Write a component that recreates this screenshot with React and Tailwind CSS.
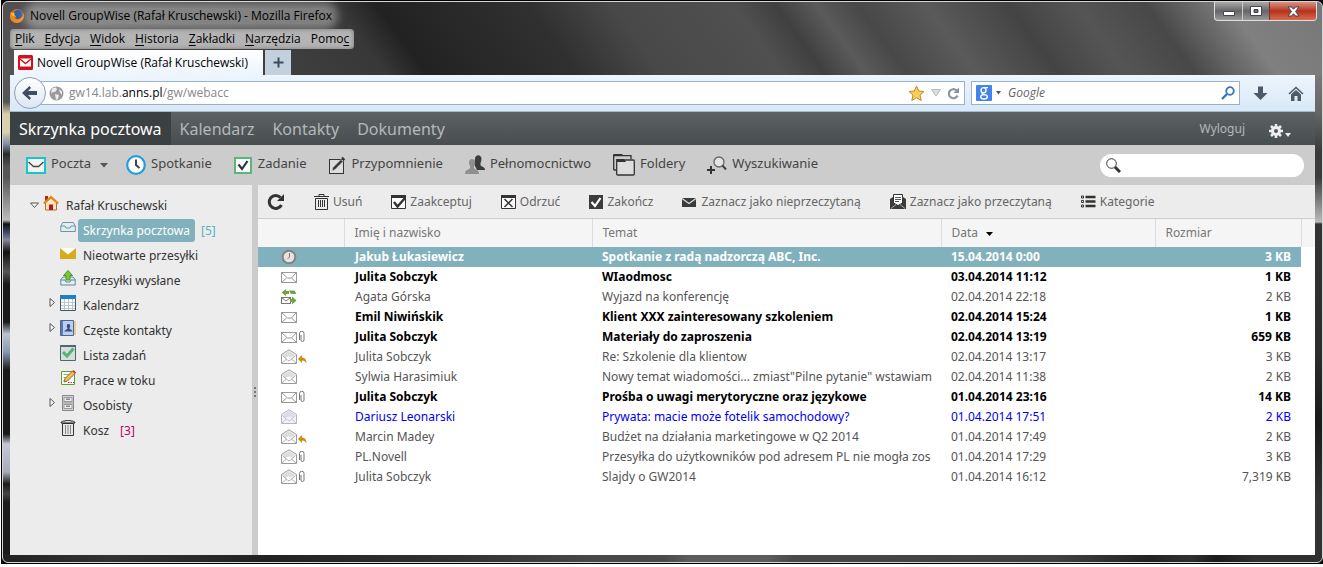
import React, { useState } from 'react'

const menu = [
  ['', 'P', 'lik'], ['', 'E', 'dycja'], ['', 'W', 'idok'], ['', 'H', 'istoria'],
  ['', 'Z', 'akładki'], ['', 'N', 'arzędzia'], ['Pomo', 'c', ''],
]

const tabs = ['Skrzynka pocztowa', 'Kalendarz', 'Kontakty', 'Dokumenty']

const messages = [
  { icon: 'clock', name: 'Jakub Łukasiewicz', subject: 'Spotkanie z radą nadzorczą ABC, Inc.', date: '15.04.2014 0:00', size: '3 KB', style: 'selected' },
  { icon: 'closed', name: 'Julita Sobczyk', subject: 'WIaodmosc', date: '03.04.2014 11:12', size: '1 KB', style: 'unread' },
  { icon: 'exchange', name: 'Agata Górska', subject: 'Wyjazd na konferencję', date: '02.04.2014 22:18', size: '2 KB', style: 'read' },
  { icon: 'closed', name: 'Emil Niwińskik', subject: 'Klient XXX zainteresowany szkoleniem', date: '02.04.2014 15:24', size: '1 KB', style: 'unread' },
  { icon: 'closed', extra: 'clip', name: 'Julita Sobczyk', subject: 'Materiały do zaproszenia', date: '02.04.2014 13:19', size: '659 KB', style: 'unread' },
  { icon: 'open', extra: 'reply', name: 'Julita Sobczyk', subject: 'Re: Szkolenie dla klientow', date: '02.04.2014 13:17', size: '3 KB', style: 'read' },
  { icon: 'open', name: 'Sylwia Harasimiuk', subject: 'Nowy temat wiadomości... zmiast"Pilne pytanie" wstawiam', date: '02.04.2014 11:38', size: '2 KB', style: 'read' },
  { icon: 'closed', extra: 'clip', name: 'Julita Sobczyk', subject: 'Prośba o uwagi merytoryczne oraz językowe', date: '01.04.2014 23:16', size: '14 KB', style: 'unread' },
  { icon: 'personal', name: 'Dariusz Leonarski', subject: 'Prywata: macie może fotelik samochodowy?', date: '01.04.2014 17:51', size: '2 KB', style: 'blue' },
  { icon: 'open', extra: 'reply', name: 'Marcin Madey', subject: 'Budżet na działania marketingowe w Q2 2014', date: '01.04.2014 17:49', size: '2 KB', style: 'read' },
  { icon: 'open', extra: 'clip', name: 'PL.Novell', subject: 'Przesyłka do użytkowników pod adresem PL nie mogła zos', date: '01.04.2014 17:29', size: '3 KB', style: 'read' },
  { icon: 'open', extra: 'clip', name: 'Julita Sobczyk', subject: 'Slajdy o GW2014', date: '01.04.2014 16:12', size: '7,319 KB', style: 'read' },
]

const rowStyles = {
  selected: 'bg-[#82b1be] font-bold text-white',
  unread: 'font-bold text-black',
  read: 'text-[#555]',
  blue: 'text-[#0000ee]',
}

// message list icons
const ClosedMail = () => (
  <svg width="16" height="16" viewBox="0 0 16 16" fill="none">
    <rect x=".5" y="3.5" width="15" height="10" fill="#fff" stroke="#999" />
    <path d="M1 4l5.500 5h4L15 4M1 13l4.500-4M15 13l-4.500-4" stroke="#999" />
  </svg>
)

const OpenMail = ({ fill = '#fff', flap = '#ddd', line = '#999' }) => (
  <svg width="16" height="16" viewBox="0 0 16 16" fill="none">
    <path d="M.5 5.500L8 .8l7.500 4.700v9H.5z" fill={fill} stroke={line} />
    <path d="M2 5.500L8 2l6 3.500-2.500 3L8 7.500 4 9z" fill={flap} />
    <path d="M1.500 6.500l5 4.500L8 12l1.500-1 5-4.500M1 14l4.500-4M15 14l-4.500-4" stroke={line} strokeWidth=".8" />
  </svg>
)

const Exchange = () => (
  <svg width="16" height="16" viewBox="0 0 16 16">
    <path d="M5 0v7L.5 3.500zM5 2h3v3H5zM8 1.500h5.500l2 3.500H10z" fill="#6da544" />
    <rect x=".5" y="8.500" width="9" height="6" fill="#fff" stroke="#777" />
    <path d="M1 9l4 3 4-3" fill="none" stroke="#777" />
    <path d="M9 10h2V7.500l4.500 4L11 15.500V13H9z" fill="#6da544" />
  </svg>
)

const Clock = () => (
  <svg width="16" height="16" viewBox="0 0 16 16">
    <circle cx="8" cy="8" r="6.300" fill="#e4e4e4" stroke="#8a8080" strokeWidth="2" />
    <path d="M8.500 4v4L6.500 10" fill="none" stroke="#777" />
  </svg>
)

const Clip = () => (
  <svg width="6" height="12" viewBox="0 0 6 12" fill="none">
    <path d="M.5 9V2.500a2 2 0 0 1 4.500 0V9a1.200 1.200 0 0 1-3 0V4" stroke="#777" />
  </svg>
)

const Reply = () => (
  <svg width="9" height="9" viewBox="0 0 9 9">
    <path d="M0 4l4-4v2.500c3 0 4.500 2 4.500 6C7.500 6.500 6.500 5.500 4 5.500V8z" fill="#cf8a10" />
  </svg>
)

const MessageIcon = ({ type }) => {
  if (type === 'clock') return <Clock />
  if (type === 'exchange') return <Exchange />
  if (type === 'open') return <OpenMail />
  if (type === 'personal') return <OpenMail fill="#f2f2fa" flap="#dcdce6" line="#b5b5c2" />
  return <ClosedMail />
}

// main toolbar icons
const MailIcon = () => (
  <svg width="20" height="20" viewBox="0 0 20 20" fill="none">
    <rect x="1" y="3" width="18" height="15" fill="#f4f4f4" stroke="#14c7cb" strokeWidth="2" />
    <path d="M2.500 7l5 4.500h5l5-4.500" stroke="#444" strokeWidth="1.300" />
  </svg>
)

const TimeIcon = () => (
  <svg width="20" height="20" viewBox="0 0 20 20" fill="none">
    <circle cx="10" cy="10" r="8.800" fill="#fff" stroke="#1fa0dc" strokeWidth="2.200" />
    <path d="M10 4.500V10l3.500 3" stroke="#444" strokeWidth="2" />
  </svg>
)

const TaskIcon = () => (
  <svg width="19" height="20" viewBox="0 0 19 20" fill="none">
    <rect x="1" y="3" width="16" height="15" fill="#fff" stroke="#58b878" strokeWidth="2" />
    <path d="M4.500 9.500l3.500 4.500 5.500-8" stroke="#333" strokeWidth="2.200" />
  </svg>
)

const NoteIcon = () => (
  <svg width="18" height="20" viewBox="0 0 18 20" fill="none">
    <rect x="1.500" y="4.500" width="14" height="14" fill="#ddd" stroke="#333" />
    <path d="M4 16l1-3.500 8-8 2 2-8 8z" fill="#333" stroke="#ccc" strokeWidth=".6" />
    <path d="M14 2.500l2.500 2.500" stroke="#333" strokeWidth="2" />
  </svg>
)

const PeopleIcon = () => (
  <svg width="20" height="20" viewBox="0 0 20 20">
    <path d="M10 4c0-5 6.500-5 6.500 0 0 2-.7 3-1 4v2c1 2 4.500 1.500 4.500 5h-8L9 9z" fill="#3c3c3c" />
    <path d="M4 7c0-4 6-4 6 0 0 2-.6 3-1 4v2c1 2 5 1 5 6H0c0-5 4-4 5-6v-2C4.500 10 4 9 4 7z" fill="#8f8f8f" />
  </svg>
)

const FoldersIcon = () => (
  <svg width="22" height="22" viewBox="0 0 22 22" fill="none">
    <path d="M.7 16V1.700H18V5M.7 16H3" stroke="#333" strokeWidth="1.300" />
    <path d="M0 0h9l2 2H1z" fill="#333" />
    <rect x="3.700" y="6" width="17.600" height="15" rx="1" fill="#ddd" stroke="#333" strokeWidth="1.300" />
    <path d="M3 5h8l2 3H4z" fill="#333" />
  </svg>
)

const FindIcon = () => (
  <svg width="20" height="20" viewBox="0 0 20 20" fill="none">
    <circle cx="12" cy="7" r="5" fill="#e4e4e4" stroke="#666" strokeWidth="1.300" />
    <path d="M15.500 10.500l3.500 4" stroke="#444" strokeWidth="2" />
    <path d="M0 15h8M4 11v8" stroke="#333" strokeWidth="2" />
  </svg>
)

const tools = [
  { label: 'Spotkanie', icon: <TimeIcon /> },
  { label: 'Zadanie', icon: <TaskIcon /> },
  { label: 'Przypomnienie', icon: <NoteIcon /> },
  { label: 'Pełnomocnictwo', icon: <PeopleIcon /> },
  { label: 'Foldery', icon: <FoldersIcon /> },
  { label: 'Wyszukiwanie', icon: <FindIcon /> },
]

// message action icons
const actions = [
  {
    label: 'Usuń',
    icon: (
      <svg width="15" height="16" viewBox="0 0 15 16" fill="none" stroke="#333">
        <path d="M0 2.500h15M5 2V.5h5V2M1.500 4.500h12v11h-12zM4.500 6v7M6.500 6v7M8.500 6v7M10.500 6v7" />
      </svg>
    ),
  },
  {
    label: 'Zaakceptuj',
    icon: (
      <svg width="15" height="16" viewBox="0 0 15 16" fill="none" stroke="#333">
        <path d="M.5 1.500h14v13H.5z" fill="#fff" />
        <path d="M0 2.500h15" strokeWidth="3" />
        <path d="M3 8l3.500 4.500L14 4" strokeWidth="2.400" />
      </svg>
    ),
  },
  {
    label: 'Odrzuć',
    icon: (
      <svg width="15" height="16" viewBox="0 0 15 16" fill="none" stroke="#333">
        <path d="M.5 1.500h14v13H.5z" fill="#fff" />
        <path d="M0 2.500h15" strokeWidth="3" />
        <path d="M3.500 5l8 8M11.500 5l-8 8" strokeWidth="1.500" />
      </svg>
    ),
  },
  {
    label: 'Zakończ',
    icon: (
      <svg width="14" height="16" viewBox="0 0 14 16" fill="none">
        <path d="M0 1h14v14H0z" fill="#3c3c3c" />
        <path d="M2.500 8l3.500 4 5.500-8" stroke="#fff" strokeWidth="2.200" />
      </svg>
    ),
  },
  {
    label: 'Zaznacz jako nieprzeczytaną',
    icon: (
      <svg width="15" height="16" viewBox="0 0 15 16" fill="none">
        <path d="M0 4h14v9H0z" fill="#3c3c3c" />
        <path d="M0 4.500l7 5 7-5" stroke="#ddd" strokeWidth="1.200" />
      </svg>
    ),
  },
  {
    label: 'Zaznacz jako przeczytaną',
    icon: (
      <svg width="16" height="16" viewBox="0 0 16 16" fill="none">
        <path d="M0 5l3-2 5 7 5-7 3 2v10H0z" fill="#3c3c3c" />
        <path d="M3.500.5h9V9l-4.500 2.500L3.500 9z" fill="#fff" stroke="#333" />
        <path d="M5 3.500h6M5 5.500h6M5 7.500h4" stroke="#555" />
        <path d="M1 14.500l5-4M15 14.500l-5-4" stroke="#aaa" />
      </svg>
    ),
  },
  {
    label: 'Kategorie',
    icon: (
      <svg width="15" height="16" viewBox="0 0 15 16" fill="none" stroke="#333">
        <path d="M4.500 3h10M4.500 7.500h10M4.500 12h10" strokeWidth="2.400" />
        <path d="M.5 2h2v2h-2zM.5 6.500h2v2h-2zM.5 11h2v2h-2z" />
      </svg>
    ),
  },
]

// folder tree icons
const folders = [
  {
    label: 'Skrzynka pocztowa', count: '[5]', active: true,
    icon: <path d="M.8 6l2-3.500h10.500l2 3.500v5.500H.8zM1 6h4l1 2h4l1-2h4" fill="#e3eef1" stroke="#6c96a3" />,
  },
  {
    label: 'Nieotwarte przesyłki',
    icon: (
      <>
        <path d="M0 3h16v11H0z" fill="#d6ab1c" />
        <path d="M0 3h16L8 9.500z" fill="#fff" />
      </>
    ),
  },
  {
    label: 'Przesyłki wysłane',
    icon: (
      <>
        <path d="M.8 9.500L3 7h10l2.200 2.500V15H.8zM1 10h4l1 2h4l1-2h4" fill="#e3eef1" stroke="#5b8b9a" />
        <path d="M8 .5l4.500 5H10V10H6V5.500H3.500z" fill="#7cc63c" stroke="#4a9a1c" />
      </>
    ),
  },
  {
    label: 'Kalendarz', branch: true,
    icon: (
      <>
        <path d="M.5.5h15v15H.5z" fill="#fff" stroke="#456" />
        <path d="M0 0h16v4H0z" fill="#1b83c4" />
        <path d="M1 7.500h14M1 10.500h14M1 13.500h14M4.500 4v11M8.500 4v11M12.500 4v11" stroke="#bcc6cf" />
      </>
    ),
  },
  {
    label: 'Częste kontakty', branch: true,
    icon: (
      <>
        <path d="M13 1h3v14h-3z" fill="#e4cf93" />
        <path d="M.5.5h13v15H.5z" fill="#bccdf0" stroke="#4e6494" />
        <path d="M1 1h2v14H1z" fill="#5c78b4" />
        <path d="M4.500 11.500c0-2 3-1.500 3-3.500-1.500-2-.5-4 1-4s2.500 2 1 4c0 2 3 1.500 3 3.500z" fill="#354f86" />
      </>
    ),
  },
  {
    label: 'Lista zadań',
    icon: (
      <>
        <path d="M.5.500h15v15H.5z" fill="#dcdcdc" stroke="#4d6670" />
        <path d="M0 0h16v2H0z" fill="#4d6670" />
        <path d="M3 7l4 4 6.500-7.500" fill="none" stroke="#4bb778" strokeWidth="3" />
      </>
    ),
  },
  {
    label: 'Prace w toku',
    icon: (
      <>
        <path d="M1.500 1.500h13v13h-13z" fill="#fff" stroke="#59a02c" />
        <path d="M3.500 4.500h6M3.500 7.500h4M3.500 10.500h2" stroke="#85b56a" />
        <path d="M4 12l1-3.500 7.500-7.500 2.500 2.500L7.500 11z" fill="#edc060" stroke="#8e6a26" />
        <path d="M12.500 1l1-1 2.500 2.500-1 1z" fill="#c33" />
        <path d="M8 12.500h6" stroke="#c33" strokeDasharray="1.500 1" />
      </>
    ),
  },
  {
    label: 'Osobisty', branch: true,
    icon: (
      <>
        <path d="M2.500.5h11v15h-11z" fill="#d5d5d5" stroke="#888" />
        <path d="M2 8h12M4 2.500h8v4H4zM4 9.500h8v4H4z" fill="#eee" stroke="#999" />
        <path d="M6 3.500h4v1.500H6zM6 10.500h4V12H6z" fill="#888" />
      </>
    ),
  },
  {
    label: 'Kosz', count: '[3]',
    icon: (
      <>
        <path d="M2.500 3.500h11v12h-11z" fill="#e8e8e8" stroke="#333" />
        <path d="M1 3c0-1.500 2-2 4-2 1-1 5-1 6 0 2 0 4 .5 4 2z" fill="#ddd" stroke="#222" />
        <path d="M5.500 5v9M8 5v9M10.500 5v9" stroke="#888" />
      </>
    ),
  },
]

const Triangle = ({ open }) => (
  <svg width="9" height="9" viewBox="0 0 9 9" fill="#f6f6f6" stroke="#555" className="shrink-0">
    {open ? <path d="M.5 2h8L4.500 6.500z" /> : <path d="M2 .5v8L6.500 4.500z" />}
  </svg>
)

const WindowBar = () => (
  <div className="flex justify-between h-[27px]">
    <div className="flex items-center gap-1.5 text-xs text-black">
      <svg width="14" height="14" viewBox="0 0 14 14">
        <circle cx="7" cy="7" r="7" fill="#e2681a" />
        <circle cx="8" cy="5.500" r="4.500" fill="#2c5fa8" />
        <path d="M1 3c0 3 2 3 4 3.500 2 .5 1 2.500-.5 2.500C7 12 12 10 13.500 5 15 11 10 14 7 14 3 14 0 11 0 7c0-2 .5-3 1-4z" fill="#ef8a1f" />
        <path d="M1 3c1 1 2 1 4 1-1 1-1 2 0 2.500C3 8 1 6 1 3z" fill="#f9c23c" />
      </svg>
      <span className="rounded-full bg-white/35 shadow-[0_0_8px_6px_rgba(255,255,255,0.35)]">Novell GroupWise (Rafał Kruschewski) - Mozilla Firefox</span>
    </div>
    <div className="flex h-[19px] -mr-0.5 rounded-b border border-t-0 border-[#ddd] overflow-hidden bg-linear-to-b from-[#aaa] via-[#666] to-[#999]">
      <button type="button" aria-label="Minimalizuj" className="w-7 flex items-center justify-center border-r border-[#ccc]">
        <svg width="12" height="12" viewBox="0 0 12 12"><path d="M.5 6.500h11v4H.5z" fill="#fff" stroke="#445" /></svg>
      </button>
      <button type="button" aria-label="Maksymalizuj" className="w-[26px] flex items-center justify-center">
        <svg width="12" height="12" viewBox="0 0 12 12"><path fillRule="evenodd" d="M.5 1.500h11v9H.5zM4 4.500h4v3H4z" fill="#fff" stroke="#445" /></svg>
      </button>
      <button type="button" aria-label="Zamknij" className="w-[47px] flex items-center justify-center border-l border-[#733] bg-linear-to-b from-[#d89484] via-[#b5301a] to-[#d86a4c]">
        <svg width="13" height="11" viewBox="0 0 13 11"><path d="M1 1h3.500l2 2.200L8.500 1H12L8.500 5.500 12 10H8.500l-2-2.300L4.500 10H1l3.500-4.500z" fill="#fff" stroke="#445" /></svg>
      </button>
    </div>
  </div>
)

const MenuBar = () => (
  <nav className="flex self-start h-5 items-center gap-2.5 px-[5px] rounded bg-[#b4b4b4] text-xs text-black shadow-[inset_0_0_4px_#777]">
    {menu.map(([before, key, after]) => (
      <button type="button" key={before + key}>{before}<span className="underline underline-offset-2">{key}</span>{after}</button>
    ))}
  </nav>
)

const BrowserTabs = () => (
  <div className="flex h-[25px] mt-px ml-1">
    <div className="flex items-center gap-1 w-[249px] pl-1 bg-linear-to-b from-white to-[#edf4fc] text-xs text-black">
      <svg width="15" height="15" viewBox="0 0 15 15">
        <rect width="15" height="15" rx="1.500" fill="#d5101c" />
        <rect x="2" y="3.500" width="11" height="8" fill="#fff" />
        <path d="M2 4l5.500 4.500L13 4" fill="none" stroke="#d5101c" strokeWidth="1.400" />
      </svg>
      Novell GroupWise (Rafał Kruschewski)
    </div>
    <button type="button" aria-label="Nowa karta" className="w-[26px] ml-0.5 flex items-center justify-center bg-[#c3d0de]">
      <svg width="11" height="11" viewBox="0 0 11 11"><path d="M.5 5.500h10M5.500.5v10" stroke="#3c4c5c" strokeWidth="2" /></svg>
    </button>
  </div>
)

const AddressBar = () => (
  <div className="flex items-center h-[37px] pl-1 pr-[11px] bg-linear-to-b from-[#edf5fd] to-[#d9e8f7] border-b border-[#a2bccf]">
    <button type="button" aria-label="Wstecz" className="relative z-10 size-8 shrink-0 rounded-full border border-[#8b9fb5] bg-linear-to-b from-white to-[#dbe6f2] flex items-center justify-center">
      <svg width="18" height="16" viewBox="0 0 18 16"><path d="M1 8l7.500-7L10 3 7 6h9v4H7l3 3-1.500 2z" fill="#3f4d60" /></svg>
    </button>
    <div className="flex items-center flex-1 h-6 -ml-2 pl-2.5 pr-1 bg-white border border-[#9bb3c8]">
      <svg width="15" height="15" viewBox="0 0 15 15" className="shrink-0">
        <circle cx="7.500" cy="7.500" r="7" fill="#9a9a9a" />
        <path d="M3 2.500l4-1 1 2-2 2.500H4l-2 2zM6 8l4 1-1 4-2 1zM10 3l3 2.500V9l-2-2.500z" fill="#ececec" />
      </svg>
      <a href="#" className="flex-1 ml-[5px] text-xs text-[#888]">gw14.lab.<span className="text-black">anns.pl</span>/gw/webacc</a>
      <svg width="17" height="17" viewBox="0 0 17 17"><path d="M8.500 1l2.200 5 5.300.5-4 3.600 1.200 5.400-4.700-2.800-4.700 2.800L5 10.100 1 6.500 6.300 6z" fill="#f9cf58" stroke="#c08a28" /></svg>
      <svg width="10" height="8" viewBox="0 0 10 8" className="mx-1.5"><path d="M.5.5h9L5 7z" fill="#ddd" stroke="#b4bbc3" /></svg>
      <svg width="13" height="13" viewBox="0 0 13 13"><path d="M10.500 8.500a4.500 4.500 0 1 1-1-5" fill="none" stroke="#8794a3" strokeWidth="2.200" /><path d="M12 .5V6H6.500z" fill="#8794a3" /></svg>
    </div>
    <div className="flex items-center w-[269px] h-6 ml-1.5 pl-1 pr-1 bg-white border border-[#9bb3c8]">
      <svg width="16" height="16" viewBox="0 0 16 16" className="shrink-0">
        <rect width="16" height="16" rx="1" fill="#4283ee" />
        <g fill="none" stroke="#fff" strokeWidth="1.400">
          <ellipse cx="7.500" cy="5.200" rx="2.500" ry="2.600" />
          <ellipse cx="8" cy="11.800" rx="3.300" ry="2.200" />
          <path d="M8 2.600h4M7 7.500c-2 1.200 0 1.800 1.500 2" />
        </g>
      </svg>
      <svg width="5" height="4" viewBox="0 0 5 4" className="shrink-0 ml-1"><path d="M0 0h5L2.500 3.500z" fill="#555" /></svg>
      <input type="text" aria-label="Szukaj w Google" placeholder="Google" className="flex-1 min-w-0 ml-[7px] text-xs outline-none placeholder:italic placeholder:text-[#666]" />
      <svg width="14" height="14" viewBox="0 0 14 14" fill="none" stroke="#3c75ad"><circle cx="9" cy="5" r="3.800" strokeWidth="1.800" /><path d="M6 8l-5 5" strokeWidth="2.400" /></svg>
    </div>
    <svg width="15" height="15" viewBox="0 0 15 15" className="ml-[13px]"><path d="M5 .5h5V7h4.500l-7 7L.5 7H5z" fill="#4c5968" /></svg>
    <svg width="16" height="15" viewBox="0 0 16 15" className="ml-5">
      <path d="M1 8l7-6.500L15 8" fill="none" stroke="#4c5968" strokeWidth="1.600" />
      <path d="M3 8.500L8 4l5 4.500V15H9.500v-5h-3v5H3z" fill="#4c5968" />
    </svg>
  </div>
)

const AppHeader = ({ tab, setTab }) => (
  <header className="flex items-stretch h-[33px] bg-linear-to-b from-[#5c6264] to-[#484e50]">
    <nav className="flex text-base">
      {tabs.map((t) => (
        <button type="button" key={t} onClick={() => setTab(t)}
          className={t === tab ? 'px-[9px] bg-[#3b4143] text-white' : 'px-[9px] text-[#b4b8ba]'}
        >{t}</button>
      ))}
    </nav>
    <a href="#" className="ml-auto self-center text-xs text-[#b4b8ba]">Wyloguj</a>
    <button type="button" aria-label="Opcje" className="flex items-center gap-0.5 ml-6 mr-6">
      <svg width="14" height="14" viewBox="0 0 14 14" className="mt-1">
        <circle cx="7" cy="7" r="3.500" fill="none" stroke="#eee" strokeWidth="3" />
        <path d="M7 0v3M7 11v3M0 7h3M11 7h3M2 2l2 2M10 10l2 2M2 12l2-2M10 4l2-2" stroke="#eee" strokeWidth="2.500" />
      </svg>
      <svg width="6" height="4" viewBox="0 0 6 4" className="mt-3"><path d="M0 0h6L3 4z" fill="#eee" /></svg>
    </button>
  </header>
)

const Toolbar = () => (
  <div className="flex items-center h-10 pl-4 pr-[11px] bg-[#ccc] text-[13px] text-[#444]">
    <div className="flex items-center gap-[22px]">
      <button type="button" className="flex items-center gap-[5px]">
        <MailIcon /><span className="pb-0.5">Poczta</span>
        <svg width="8" height="5" viewBox="0 0 8 5" className="ml-1 -mr-1"><path d="M0 0h8L4 4.500z" fill="#555" /></svg>
      </button>
      {tools.map((tool) => (
        <button type="button" key={tool.label} className="flex items-center gap-[5px]">
          {tool.icon}<span className="pb-0.5">{tool.label}</span>
        </button>
      ))}
    </div>
    <label className="flex items-center w-[204px] h-[23px] ml-auto px-1.5 rounded-full bg-white">
      <svg width="15" height="15" viewBox="0 0 15 15" fill="none" stroke="#333"><circle cx="5.500" cy="5.500" r="4.800" /><path d="M9 9l5 5" strokeWidth="3" /></svg>
      <input type="search" aria-label="Szukaj" className="flex-1 min-w-0 ml-1 outline-none" />
    </label>
  </div>
)

const Sidebar = () => (
  <aside className="w-[242px] shrink-0 pt-2 bg-[#ececec] text-xs text-[#333]">
    <div className="flex items-center h-[25px] pl-5">
      <Triangle open />
      <svg width="16" height="16" viewBox="0 0 16 16" className="ml-1 mb-1.5">
        <path d="M2 1h3v5H2z" fill="#b3261c" />
        <path d="M2.500 7.500L8 3l5.500 4.500v7.500h-11z" fill="#fbe6bf" stroke="#b4711e" />
        <path d="M.8 8.500L8 2l7.200 6.500" fill="none" stroke="#e08a1e" strokeWidth="2.200" />
        <path d="M6 9.500h4V15H6z" fill="#b3161c" />
      </svg>
      <span className="ml-[7px]">Rafał Kruschewski</span>
    </div>
    <ul>
      {folders.map((f) => (
        <li key={f.label} className="flex items-center h-[25px] pl-[38px]">
          <span className="w-3 mb-1.5">{f.branch && <Triangle />}</span>
          <svg width="16" height="16" viewBox="0 0 16 16" className="shrink-0 mb-1.5">{f.icon}</svg>
          <a href="#" className={f.active ? 'ml-0.5 px-[5px] rounded-[3px] bg-[#82b1be] text-white leading-[23px]' : 'ml-0.5 px-[5px]'}>{f.label}</a>
          {f.count && <span className={f.active ? 'ml-1.5 text-[#5ab0c4]' : 'ml-1.5 text-[#c00068]'}>{f.count}</span>}
        </li>
      ))}
    </ul>
  </aside>
)

const MessageTable = () => (
  <table className="w-full table-fixed border-collapse text-xs">
    <colgroup>
      <col className="w-[86px]" />
      <col className="w-[248px]" />
      <col />
      <col className="w-[214px]" />
      <col className="w-[146px]" />
      <col className="w-3.5" />
    </colgroup>
    <thead>
      <tr className="h-7 bg-[#f5f5f5] text-left text-[#777]">
        <th aria-label="Typ" className="border-r border-[#ddd]"></th>
        <th className="pl-2.5 font-normal border-r border-[#ddd]">Imię i nazwisko</th>
        <th className="pl-2.5 font-normal border-r border-[#ddd]">Temat</th>
        <th className="pl-2.5 font-normal border-r border-[#ddd]">
          Data
          <svg width="7" height="4" viewBox="0 0 7 4" className="inline ml-2"><path d="M0 0h7L3.500 4z" fill="#000" /></svg>
        </th>
        <th className="pl-2.5 font-normal border-r border-[#ddd]">Rozmiar</th>
        <th></th>
      </tr>
    </thead>
    <tbody>
      {messages.map((m) => (
        <tr key={m.date} className={rowStyles[m.style]}>
          <td className="h-5 pl-[23px] leading-4">
            <span className="flex items-center"><MessageIcon type={m.icon} />{m.extra === 'clip' && <span className="ml-0.5"><Clip /></span>}{m.extra === 'reply' && <span className="ml-px mt-1"><Reply /></span>}</span>
          </td>
          <td className="pl-[11px] leading-4">{m.name}</td>
          <td className="pl-2.5 leading-4 overflow-hidden whitespace-nowrap">{m.subject}</td>
          <td className="pl-2.5 leading-4">{m.date}</td>
          <td className="pr-2.5 leading-4 text-right">{m.size}</td>
          <td className="bg-white"></td>
        </tr>
      ))}
    </tbody>
  </table>
)

const App = () => {

  const [tab, setTab] = useState('Skrzynka pocztowa')

  return (
    <div className="flex min-h-screen pl-px pb-[3px] bg-white font-['Noto_Sans','Open_Sans',sans-serif]">
      <div className="flex flex-1 min-w-0 p-px pr-0 bg-black">
        {/* glass frame: title bar, bottom edge, left edge, right edge */}
        <div className="flex flex-col flex-1 min-w-0 px-[7px] pb-[7px] rounded-md border border-[#d5d5d5] bg-[#2c2c2c] bg-[linear-gradient(54deg,#555_0%,#444_15%,#383838_28%,#222_31%,#303030_42%,#484848_48%,#505050_57%,#404040_60%,#5a5a5a_63%,#484848_66%,#5a5a5a_71%,#444_77%,#555_82%,#484848_87%,#808080_93%,#777_100%),linear-gradient(90deg,#222_0%,#333_8%,#222_20%,#333_35%,#484848_45%,#4a4a4a_50%,#5c5c5c_52%,#5c5c5c_58%,#484848_60%,#404040_80%,#222_87%,#303030_90%,#1c1c1c_92%,#303030_95%),linear-gradient(180deg,#555_75px,#555_100px,#d8d0a8_112px,#d8d0b0_130px,#8090a8_142px,#2a2a2a_152px,#555_165px,#555_175px,#bbb_218px,#111_222px,#404468_230px,#889_238px,#111_250px,#555_270px,#1a1a1a_282px,#1a1a1a_320px,#bcc4d0_332px,#8898b0_350px,#1a1a1a_368px,#1a1a1a_432px,#c4c8d4_442px,#a8acb8_470px,#1a1a1a_482px,#444_492px,#1c1c1c_500px),linear-gradient(180deg,#777_75px,#666_110px,#3a3a3a_150px,#3a3a3a_175px,#bbb_220px,#333_222px,#2c2c2c_350px,#1a1a1a_420px,#333_500px)] bg-[length:100%_74px,100%_8px,8px_100%,8px_100%] bg-[position:0_0,0_100%,0_0,100%_0] bg-no-repeat">
          <div className="flex flex-col font-['Open_Sans',sans-serif]">
            <WindowBar />
            <MenuBar />
            <BrowserTabs />
            <AddressBar />
          </div>
          <AppHeader tab={tab} setTab={setTab} />
          <Toolbar />
          <div className="flex flex-1">
            <Sidebar />
            <div className="flex flex-col items-center justify-center gap-0.5 w-1.5 shrink-0 bg-[#ccc] pt-11">
              <span className="size-0.5 bg-[#777]"></span>
              <span className="size-0.5 bg-[#777]"></span>
              <span className="size-0.5 bg-[#777]"></span>
            </div>
            <main className="flex-1 min-w-0 bg-white">
              <div className="flex items-center gap-[29px] h-[34px] pl-[9px] bg-[#ececec] border-b border-[#ccc] text-xs text-[#666]">
                <button type="button" aria-label="Odśwież">
                  <svg width="18" height="18" viewBox="0 0 18 18"><path d="M14.500 12A6.500 6.500 0 1 1 13.500 4.500" fill="none" stroke="#333" strokeWidth="3" /><path d="M17 1v7h-7z" fill="#333" /></svg>
                </button>
                {actions.map((a) => (
                  <button type="button" key={a.label} className="flex items-center gap-1">{a.icon}{a.label}</button>
                ))}
              </div>
              <MessageTable />
            </main>
          </div>
        </div>
      </div>
    </div>
  )
}

export default App
